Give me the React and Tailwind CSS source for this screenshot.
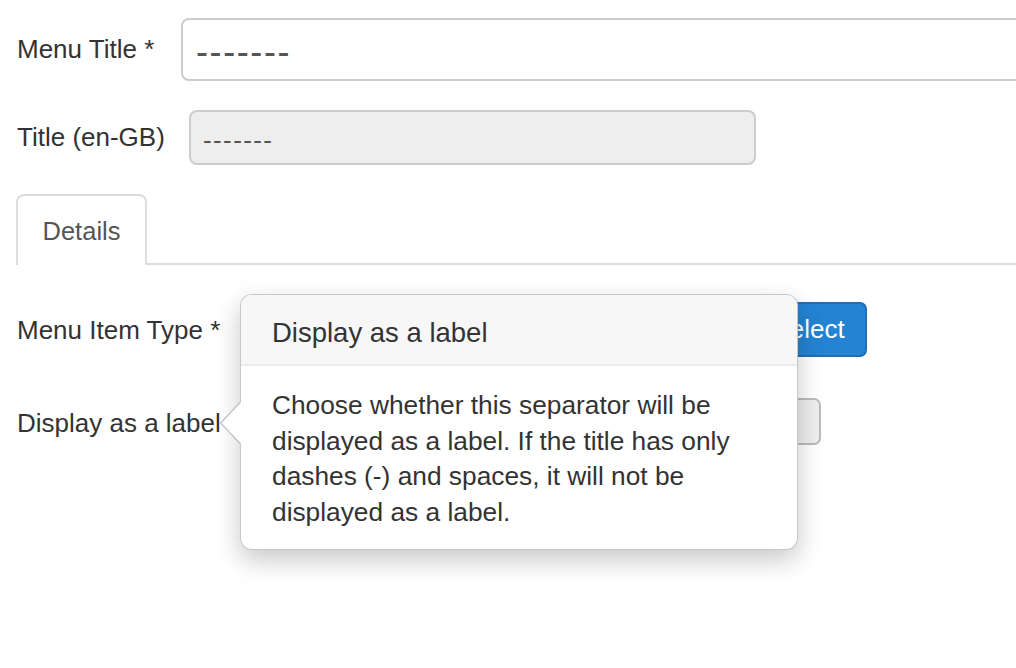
import React from "react";

export default function App() {
  const font = { fontFamily: '"Liberation Sans", Arial, sans-serif' };
  return (
    <div className="relative w-[1016px] h-[668px] overflow-hidden bg-white text-[#333]" style={font}>
      <div className="pt-[18px]">
        {/* Row 1 */}
        <div className="flex items-center gap-[28px] pl-[17px]">
          <label className="shrink-0 text-[26px] leading-[30px] w-[136px] whitespace-nowrap pb-[2px]">Menu Title *</label>
          <div className="shrink-0 w-[900px] h-[63px] border-2 border-[#ccc] rounded-[8px] flex items-center pl-[13px] pt-[4px]">
            <span className="text-[36px] tracking-[1.6px] text-[#555] leading-none">-------</span>
          </div>
        </div>
        {/* Row 2 */}
        <div className="flex items-center gap-[28px] pl-[17px] mt-[29px]">
          <label className="shrink-0 text-[26px] leading-[30px] w-[144px] whitespace-nowrap pb-[2px]">Title (en-GB)</label>
          <div className="shrink-0 w-[567px] h-[55px] border-2 border-[#ccc] bg-[#eee] rounded-[8px] flex items-center pl-[12px] pt-[4px]">
            <span className="text-[26px] tracking-[1.4px] text-[#555] leading-none">-------</span>
          </div>
        </div>
        {/* Tabs */}
        <div className="ml-[16px] mt-[29px] border-b-2 border-[#ddd] flex">
          <div className="w-[131px] h-[71px] -mb-[2px] border-2 border-b-0 border-[#ddd] rounded-t-[8px] bg-white flex items-center justify-center">
            <span className="text-[25.5px] text-[#555] pt-[1px]">Details</span>
          </div>
        </div>
        {/* Row 3 */}
        <div className="flex items-center pl-[17px] mt-[37px]">
          <label className="shrink-0 text-[26px] leading-[30px] w-[223px] whitespace-nowrap">Menu Item Type *</label>
          <div className="w-[510px] h-[55px] border-2 border-[#ccc] bg-[#eee] rounded-l-[8px]"></div>
          <div className="w-[117px] h-[55px] bg-[#2384d3] border-2 border-[#1f6fb2] rounded-[7px] flex items-center justify-center text-white text-[26px]">
            Select
          </div>
        </div>
        {/* Row 4 */}
        <div className="flex items-center pl-[17px] mt-[41px]">
          <label className="shrink-0 text-[26px] leading-[30px] w-[223px] whitespace-nowrap pt-[2px]">Display as a label</label>
          <div className="w-[581px] h-[47px] border-2 border-[#bbb] bg-[#eee] rounded-[7px]"></div>
        </div>
      </div>

      {/* Popover */}
      <div className="absolute left-[240px] top-[294px] w-[558px] h-[256px] bg-white border border-[rgba(0,0,0,0.22)] rounded-[12px] shadow-[0_10px_26px_rgba(0,0,0,0.22)]">
        <svg className="absolute left-[-21px] top-[107px]" width="24" height="44" viewBox="0 0 24 44">
          <polygon points="20.5,0 0.5,21 20.5,42 24,42 24,0" fill="#fff" />
          <polyline points="20.5,0 0.5,21 20.5,42" fill="none" stroke="#bdbdbd" strokeWidth="1.2" />
        </svg>
        <div className="h-[71px] bg-[#f7f7f7] border-b-2 border-[#ebebeb] rounded-t-[11px] flex items-center pl-[31px]">
          <span className="text-[27.5px] text-[#333] pt-[6px]">Display as a label</span>
        </div>
        <div className="pl-[31px] pt-[22px] text-[26.3px] leading-[35.5px] text-[#333] whitespace-nowrap">
          Choose whether this separator will be<br />
          displayed as a label. If the title has only<br />
          dashes (-) and spaces, it will not be<br />
          displayed as a label.
        </div>
      </div>
    </div>
  );
}
